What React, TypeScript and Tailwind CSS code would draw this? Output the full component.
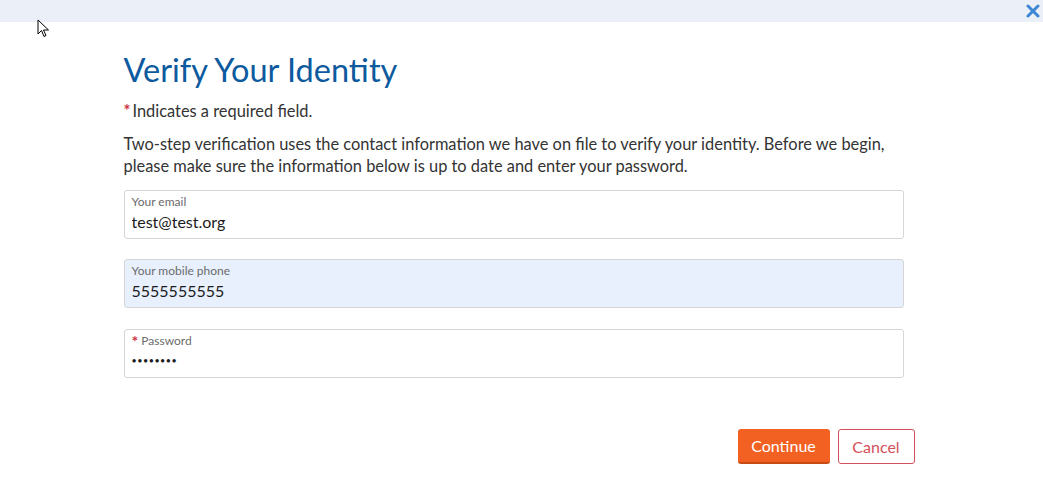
import { useState } from 'react';

function Field({
  label,
  value,
  type = 'text',
  required,
  filled,
  className = '',
}: {
  label: string;
  value: string;
  type?: string;
  required?: boolean;
  filled?: boolean;
  className?: string;
}) {
  return (
    <label
      className={`block h-[49px] rounded-[3px] border border-[#d6d6d6] px-[7px] pt-[4px] ${
        filled ? 'bg-[#e8f0fe]' : 'bg-white'
      } ${className}`}
    >
      <span className="flex items-center text-[12px] leading-[14px] text-[#6b6b6b]">
        {required && <span className="mr-[3px] text-[16px] font-bold leading-[12px] text-[#d0343f]">*</span>}
        {label}
      </span>
      <input
        type={type}
        defaultValue={value}
        className={`mt-[3px] block h-[20px] w-full bg-transparent leading-[20px] text-[#1b1b1b] outline-none ${
          type === 'password' ? 'text-[9px] tracking-[0.5px]' : 'text-[16px]'
        }`}
      />
    </label>
  );
}

export default function App() {
  const [open] = useState(true);
  if (!open) return null;

  return (
    <div className="relative min-h-[485px] bg-white font-['Lato','Open_Sans',sans-serif]">
      <div className="flex h-[22px] items-center justify-end bg-[#ebf0f8] pr-[3px]">
        <button className="text-[#3d86d4]" aria-label="Close">
          <svg width="14" height="14" viewBox="0 0 14 14">
            <path d="M2 2L12 12M12 2L2 12" stroke="currentColor" strokeWidth="3" strokeLinecap="round" />
          </svg>
        </button>
      </div>

      {/* mouse pointer in the screenshot */}
      <svg className="absolute left-[37px] top-[19px]" width="13" height="19" viewBox="0 0 13 19">
        <path d="M1 1L1 15L4.5 11.5L7 17.5L9 16.5L6.5 11L11.5 11Z" fill="white" stroke="black" strokeWidth="1" strokeLinejoin="round" />
      </svg>

      <div className="mx-auto w-[780px] -translate-x-[8px] pt-[28px]">
        <h1 className="text-[32.5px] leading-[40px] text-[#0d5a9e]">Verify Your Identity</h1>
        <p className="mt-[10px] text-[16.4px] leading-[22px] text-[#333]">
          <span className="mr-[2px] font-bold text-[#d0343f]">*</span>Indicates a required field.
        </p>
        <p className="mt-[11px] text-[16.4px] leading-[22px] text-[#333]">
          Two-step verification uses the contact information we have on file to verify your identity. Before we begin,
          please make sure the information below is up to date and enter your password.
        </p>

        <div className="mt-[13px] flex flex-col gap-[20px]">
          <Field label="Your email" value="test@test.org" />
          <Field label="Your mobile phone" value="5555555555" filled />
          <Field label="Password" value="password" type="password" required className="mt-[1px]" />
        </div>

        <div className="mr-[-11px] mt-[51px] flex justify-end gap-[8px]">
          <button className="h-[35px] w-[92px] rounded-[3px] border-b-2 border-[#c94b14] bg-[#f26122] text-[16px] text-white">
            Continue
          </button>
          <button className="h-[35px] w-[77px] rounded-[3px] border border-[#cf4f5a] bg-white text-[16px] text-[#d4505b]">
            Cancel
          </button>
        </div>
      </div>
    </div>
  );
}
